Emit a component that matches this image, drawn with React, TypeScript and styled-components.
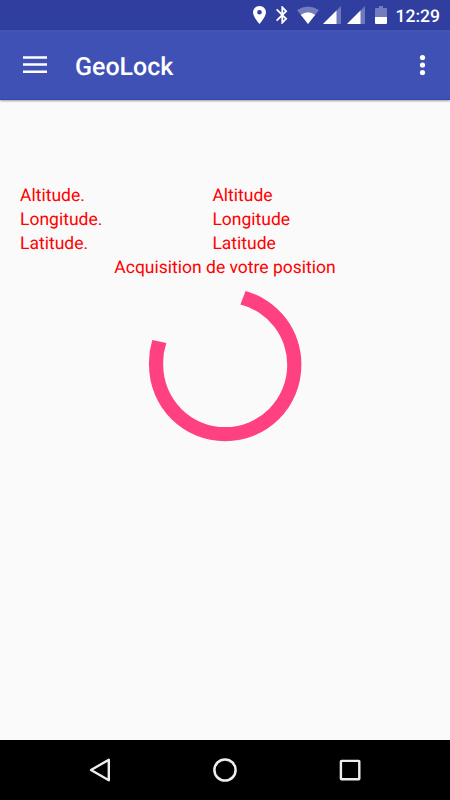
import React from "react";
import styled, { createGlobalStyle } from "styled-components";

const GlobalStyle = createGlobalStyle`
  * { box-sizing: border-box; }
  body { margin: 0; background: #fafafa; }
`;

const Screen = styled.div`
  width: 450px;
  height: 800px;
  display: flex;
  flex-direction: column;
  overflow: hidden;
  background: #fafafa;
  font-family: Roboto, "Liberation Sans", sans-serif;
  text-rendering: geometricPrecision;
`;

const StatusBar = styled.header`
  flex: none;
  height: 30px;
  padding: 0 10px 0 0;
  display: flex;
  align-items: center;
  justify-content: flex-end;
  background: #303f9f;
  color: #fff;
`;

const StatusIcon = styled.svg<{ $gap: number }>`
  flex: none;
  display: block;
  margin-right: ${(p) => p.$gap}px;
`;

const Clock = styled.time`
  width: 44.5px;
  font-size: 17.5px;
  font-weight: 500;
  line-height: 28px;
  padding-top: 4px;
  white-space: nowrap;
`;

const AppBar = styled.nav`
  flex: none;
  height: 70px;
  padding: 0 15px 0 23px;
  display: flex;
  align-items: center;
  background: linear-gradient(#4456b8, #3f51b5 3px, #3f51b5 69px, #3446a8 69px);
  box-shadow: 0 1px 2px rgba(0, 0, 0, 0.38);
  color: #fff;
`;

const IconButton = styled.button`
  display: flex;
  padding: 0;
  border: 0;
  background: none;
`;

const Title = styled.h1`
  flex: 1;
  margin: 5px 0 0 28px;
  font-size: 25px;
  font-weight: 500;
  line-height: 30px;
`;

const Content = styled.main`
  flex: 1;
  padding: 85.2px 20px 0;
  display: flex;
  flex-direction: column;
  color: #ff0000;
  font-size: 17.5px;
  line-height: 23.9px;
`;

const Readings = styled.dl`
  margin: 0;
  display: grid;
  grid-template-columns: 192.4px 1fr;
`;

const Label = styled.dt``;

const Value = styled.dd`
  margin: 0;
`;

const Message = styled.p`
  margin: 0;
  text-align: center;
`;

const Spinner = styled.svg`
  align-self: center;
  display: block;
  margin-top: 7.2px;
`;

const NavigationBar = styled.footer`
  flex: none;
  height: 60px;
  padding: 0 87px;
  display: flex;
  align-items: center;
  justify-content: space-between;
  background: #000;
`;

const readings = ["Altitude", "Longitude", "Latitude"];

const SignalIcon = ({ gap }: { gap: number }) => (
  <StatusIcon $gap={gap} width="18" height="18" viewBox="0 0 18 18">
    <path d="M0 18 18 0V18Z" fill="#fff" opacity=".3" />
    <path d="M0 18 13.5 4.5V18Z" fill="#fff" />
  </StatusIcon>
);

export default function App() {
  return (
    <Screen>
      <GlobalStyle />
      <StatusBar>
        <StatusIcon $gap={9.5} width="13" height="18" viewBox="5 2 14 20" preserveAspectRatio="none">
          <path
            d="M12 2C8.13 2 5 5.13 5 9c0 5.25 7 13 7 13s7-7.75 7-13c0-3.87-3.13-7-7-7zm0 9.5a2.5 2.5 0 1 1 0-5 2.5 2.5 0 0 1 0 5z"
            fill="#fff"
          />
        </StatusIcon>
        <StatusIcon $gap={9} width="12" height="18" viewBox="5 2 13.4 20" preserveAspectRatio="none">
          <path
            d="M17.71 7.71 12 2h-1v7.59L6.41 5 5 6.41 10.59 12 5 17.59 6.41 19 11 14.41V22h1l5.71-5.71L13.41 12l4.3-4.29zM13 5.83l1.88 1.88L13 9.59V5.83zm1.88 10.46L13 18.17v-3.76l1.88 1.88z"
            fill="#fff"
          />
        </StatusIcon>
        <StatusIcon $gap={4.5} width="22" height="18" viewBox="0 0 22 18">
          <path d="M0 4Q11-3 22 4L11 18Z" fill="#fff" opacity=".32" />
          <path d="M3.8 8.7Q11 3.6 18.2 8.7L11 18Z" fill="#fff" />
        </StatusIcon>
        <SignalIcon gap={6} />
        <SignalIcon gap={10} />
        <StatusIcon $gap={8.5} width="12" height="18" viewBox="0 0 12 18">
          <path d="M1 2h3V0h4v2h3q1 0 1 1v8H0V3q0-1 1-1Z" fill="#fff" opacity=".32" />
          <path d="M0 11h12v6q0 1-1 1H1q-1 0-1-1Z" fill="#fff" />
        </StatusIcon>
        <Clock>12:29</Clock>
      </StatusBar>

      <AppBar>
        <IconButton aria-label="Menu">
          <svg width="24" height="18" viewBox="0 0 24 18">
            <path d="M0 1.4h24M0 8.6h24M0 15.8h24" stroke="#fff" strokeWidth="2.5" />
          </svg>
        </IconButton>
        <Title>GeoLock</Title>
        <IconButton aria-label="Options">
          <svg width="25" height="22" viewBox="0 0 25 22">
            <g fill="#fff">
              <circle cx="12.5" cy="3.5" r="2.6" />
              <circle cx="12.5" cy="11" r="2.6" />
              <circle cx="12.5" cy="18.5" r="2.6" />
            </g>
          </svg>
        </IconButton>
      </AppBar>

      <Content>
        <Readings>
          {readings.map((name) => (
            <React.Fragment key={name}>
              <Label>{name}.</Label>
              <Value>{name}</Value>
            </React.Fragment>
          ))}
        </Readings>
        <Message>Acquisition de votre position</Message>
        <Spinner width="154" height="154" viewBox="148 288 154 154" role="progressbar">
          <path
            d="M245.6 291A76.2 76.2 0 0 1 301.4 365.1A76.2 76.2 0 0 1 225.2 441.3A76.2 76.2 0 0 1 149 365.1A76.2 76.2 0 0 1 152.3 340L166.3 343A62 62 0 0 0 163.2 365.1A62 62 0 0 0 225.2 427.1A62 62 0 0 0 287.2 365.1A62 62 0 0 0 240.4 304.6Z"
            fill="#ff4081"
          />
        </Spinner>
      </Content>

      <NavigationBar>
        <svg width="26" height="26" viewBox="87 757 26 26">
          <path d="M91 770 108.8 759.8V780.2Z" fill="none" stroke="#eee" strokeWidth="2.4" strokeLinejoin="round" />
        </svg>
        <svg width="26" height="26" viewBox="212 757 26 26">
          <circle cx="225" cy="770" r="10.6" fill="none" stroke="#eee" strokeWidth="2.5" />
        </svg>
        <svg width="26" height="26" viewBox="337 757 26 26">
          <rect x="340.9" y="760.9" width="18.4" height="18.4" rx=".6" fill="none" stroke="#eee" strokeWidth="2.4" />
        </svg>
      </NavigationBar>
    </Screen>
  );
}
